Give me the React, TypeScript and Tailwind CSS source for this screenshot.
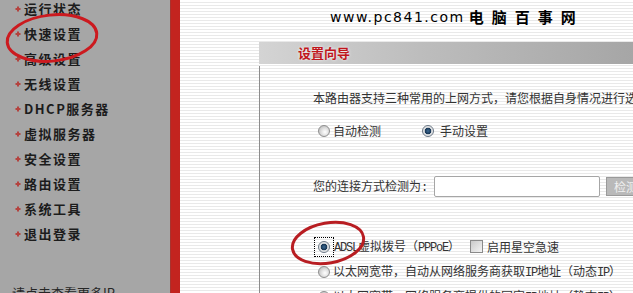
import React from "react";

const menu = [
  "运行状态",
  "快速设置",
  "高级设置",
  "无线设置",
  "DHCP服务器",
  "虚拟服务器",
  "安全设置",
  "路由设置",
  "系统工具",
  "退出登录",
];

function Bullet() {
  return (
    <svg width="6" height="6" viewBox="0 0 6 6" className="shrink-0">
      <path d="M3 0.5v5M0.5 3h5" stroke="#b4433f" strokeWidth="2" />
    </svg>
  );
}

function Radio({ checked = false }: { checked?: boolean }) {
  return (
    <span
      className={
        checked
          ? "inline-block w-[12px] h-[12px] rounded-full border border-[#6b7785] bg-[radial-gradient(circle,#3d6a94_0px,#163452_3px,#d6d9dc_3.6px,#f6f6f6_6px)] shrink-0"
          : "inline-block w-[12px] h-[12px] rounded-full border border-[#8e8e8e] bg-[radial-gradient(circle_at_60%_60%,#ffffff_0px,#e6e6e6_3px,#c8c8c8_6px)] shrink-0"
      }
    />
  );
}

function L({ children }: { children: React.ReactNode }) {
  return (
    <span className="font-['Liberation_Mono',monospace] text-[12px] tracking-[-1.2px]">
      {children}
    </span>
  );
}

export default function App() {
  return (
    <div className="relative w-[633px] h-[293px] overflow-hidden flex font-['Noto_Sans_CJK_SC',sans-serif]">
      {/* sidebar */}
      <div className="w-[170px] shrink-0 bg-[#a6a6a6] flex flex-col">
        <ul className="flex flex-col shrink-0 -mt-[4px] pl-[15px]">
          {menu.map((m) => (
            <li key={m} className="h-[25px] shrink-0 flex items-center gap-[3px]">
              <Bullet />
              <span className="text-[13px] font-bold tracking-[1.5px] text-[#1c1c1c] leading-none">
                {m}
              </span>
            </li>
          ))}
        </ul>
        <p className="mt-[39px] shrink-0 pl-[12px] text-[13px] leading-[16px] text-[#262626] whitespace-nowrap">
          请点击查看更多IP-
        </p>
      </div>
      <div className="w-[10px] shrink-0 bg-[#c3241f] border-l border-[#a8332e]" />

      {/* content */}
      <div className="flex-1 flex flex-col bg-[image:repeating-linear-gradient(180deg,#ffffff_0px,#ffffff_2px,#e9e9e9_2px,#e9e9e9_3px)]">
        <div className="h-[42px] shrink-0 pt-[8px] pl-[150px] flex items-start whitespace-nowrap">
          <span className="font-['DejaVu_Sans',sans-serif] text-[14px] leading-[18px] tracking-[1.5px] text-black">
            www.pc841.com
          </span>
          <span className="ml-[4px] text-[15px] leading-[18px] font-bold tracking-[8px] text-black">
            电脑百事网
          </span>
        </div>

        <div className="ml-[79px] flex flex-col flex-1">
          <div className="h-[22px] shrink-0 pl-[39px] flex items-center bg-[linear-gradient(90deg,#d4d4d4,#bdbdbd_40%,#a3a3a3)]">
            <span className="text-[13px] font-bold text-[#c0161c] [text-shadow:0_0_3px_#ffffff]">
              设置向导
            </span>
          </div>
          <div className="flex-1 flex flex-col border-l border-[#8c8c8c] mt-[2px] pl-[53px] text-[12px] text-[#333] whitespace-nowrap">
            <div className="mt-[19px] h-[25px] shrink-0 flex items-center">
              本路由器支持三种常用的上网方式，请您根据自身情况进行选择。
            </div>
            <div className="mt-[8px] h-[25px] shrink-0 flex items-center pl-[5px]">
              <Radio />
              <span className="ml-[3px]">自动检测</span>
              <span className="ml-[41px] flex">
                <Radio checked />
              </span>
              <span className="ml-[6px]">手动设置</span>
            </div>
            <div className="mt-[31px] h-[25px] shrink-0 flex items-center">
              <span>您的连接方式检测为<L>:</L></span>
              <span className="ml-[7px] w-[166px] h-[21px] rounded-[2px] border border-[#a6a6a6] bg-white shrink-0" />
              <span className="ml-[6px] w-[40px] h-[19px] shrink-0 bg-[#b9b9b9] border border-[#9a9a9a] text-[#f0f0f0] flex items-center justify-center">
                检测
              </span>
            </div>
            <div className="mt-[35px] h-[25px] shrink-0 flex items-center pl-[1px]">
              <span className="border border-dotted border-black px-[3px] py-[3px] flex">
                <Radio checked />
              </span>
              <span>
                <L>ADSL</L>虚拟拨号（<L>PPPoE</L>）
              </span>
              <span className="ml-[10px] w-[13px] h-[13px] shrink-0 border border-[#8a8a8a] bg-[linear-gradient(135deg,#c9c9c9,#f4f4f4)]" />
              <span className="ml-[4px]">启用星空急速</span>
            </div>
            <div className="h-[25px] shrink-0 flex items-center pl-[5px]">
              <Radio />
              <span className="ml-[3px]">
                以太网宽带，自动从网络服务商获取<L>IP</L>地址（动态<L>IP</L>）
              </span>
            </div>
            <div className="h-[25px] shrink-0 flex items-center pl-[5px]">
              <Radio />
              <span className="ml-[3px]">
                以太网宽带，网络服务商提供的固定<L>IP</L>地址（静态<L>IP</L>）
              </span>
            </div>
          </div>
        </div>
      </div>

      {/* red annotation circles */}
      <svg
        className="absolute inset-0 pointer-events-none"
        width="633"
        height="293"
        viewBox="0 0 633 293"
      >
        <ellipse
          cx="52"
          cy="38"
          rx="45"
          ry="23"
          transform="rotate(-6 52 38)"
          fill="none"
          stroke="#cc1a1f"
          strokeWidth="3"
        />
        <ellipse
          cx="328"
          cy="243"
          rx="36"
          ry="20"
          transform="rotate(-10 328 243)"
          fill="none"
          stroke="#b81d22"
          strokeWidth="3"
        />
      </svg>
    </div>
  );
}
